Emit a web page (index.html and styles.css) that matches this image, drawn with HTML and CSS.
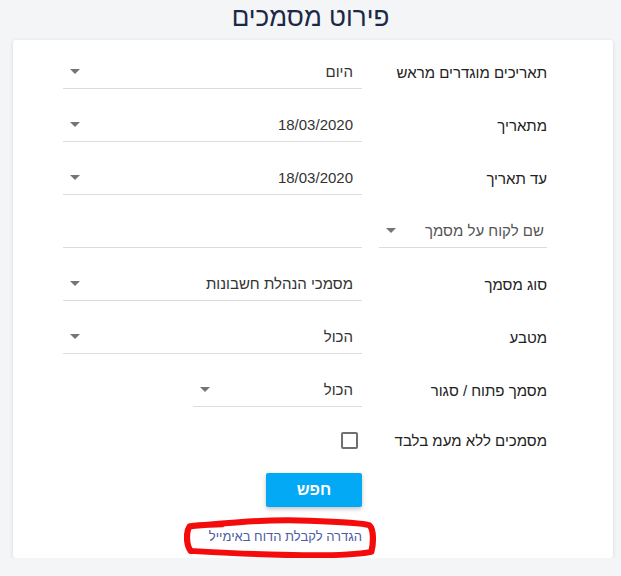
FILE: index.html
```html
<!DOCTYPE html>
<html lang="he" dir="rtl">
<head>
    <meta charset="UTF-8">
    <meta name="viewport" content="width=device-width, initial-scale=1.0">
    <title>פירוט מסמכים</title>
    <link rel="stylesheet" href="styles.css">
</head>
<body>
    <h1 class="page-title">פירוט מסמכים</h1>

    <div class="card">
        <!-- שורות הסינון -->
        <div class="row">
            <label class="row-label">תאריכים מוגדרים מראש</label>
            <div class="select">
                <span class="select-value">היום</span>
                <span class="arrow"></span>
            </div>
        </div>

        <div class="row">
            <label class="row-label">מתאריך</label>
            <div class="select">
                <span class="select-value">18/03/2020</span>
                <span class="arrow"></span>
            </div>
        </div>

        <div class="row">
            <label class="row-label">עד תאריך</label>
            <div class="select">
                <span class="select-value">18/03/2020</span>
                <span class="arrow"></span>
            </div>
        </div>

        <div class="row">
            <div class="select select-label">
                <span class="select-value muted">שם לקוח על מסמך</span>
                <span class="arrow"></span>
            </div>
            <div class="select">
                <span class="select-value"></span>
            </div>
        </div>

        <div class="row">
            <label class="row-label">סוג מסמך</label>
            <div class="select">
                <span class="select-value">מסמכי הנהלת חשבונות</span>
                <span class="arrow"></span>
            </div>
        </div>

        <div class="row">
            <label class="row-label">מטבע</label>
            <div class="select">
                <span class="select-value">הכול</span>
                <span class="arrow"></span>
            </div>
        </div>

        <div class="row">
            <label class="row-label">מסמך פתוח / סגור</label>
            <div class="field-half">
                <div class="select">
                    <span class="select-value">הכול</span>
                    <span class="arrow"></span>
                </div>
            </div>
        </div>

        <div class="row row-check">
            <label class="row-label">מסמכים ללא מעמ בלבד</label>
            <div>
                <span class="checkbox"></span>
            </div>
        </div>

        <div class="row row-actions">
            <div></div>
            <div class="actions">
                <button class="btn-search">חפש</button>
                <a class="email-link" href="#">הגדרה לקבלת הדוח באימייל
                    <!-- סימון ביד באדום -->
                    <svg class="scribble" width="196" height="44" viewBox="0 0 204 48" preserveAspectRatio="none">
                        <path d="M8 10 C 50 6, 90 2, 130 4 C 160 5, 185 6, 193 9 C 198 14, 197 30, 195 38 C 170 43, 120 42, 90 41 C 60 40, 25 38, 7 37 C 2 30, 2 16, 6 10 C 20 8, 26 9, 40 8" fill="none" stroke="#f40c0c" stroke-width="6.5" stroke-linecap="round" stroke-linejoin="round"/>
                    </svg>
                </a>
            </div>
        </div>
    </div>
</body>
</html>
```

FILE: styles.css
```css
body {
    margin: 0;
    background-color: #f4f5f7;
    font-family: "Liberation Sans", "DejaVu Sans", sans-serif;
    color: #212121;
}

.page-title {
    margin: 0 0 6px 0;
    height: 34px;
    line-height: 34px;
    font-size: 26px;
    font-weight: normal;
    text-align: center;
    color: #1c2846;
    width: 621px;
}

/* הכרטיס הלבן */
.card {
    width: 600px;
    height: 518px;
    margin-left: 13px;
    margin-right: 8px;
    box-sizing: border-box;
    padding: 15px 66px 0 50px;
    background-color: #fff;
    border-radius: 3px;
    box-shadow: 0 1px 4px rgba(0, 0, 0, 0.12);
}

.row {
    display: grid;
    grid-template-columns: 168px 299px;
    column-gap: 17px;
    align-items: center;
    height: 34px;
    margin-bottom: 19px;
}

.row-label {
    font-size: 15px;
}

.select {
    display: flex;
    align-items: center;
    justify-content: space-between;
    height: 33px;
    border-bottom: 1px solid #dcdcdc;
    padding: 0 9px 0 7px;
    font-size: 15px;
    color: #333;
}

.select-label {
    padding-right: 3px;
}

.muted {
    color: #555;
}

.arrow {
    width: 0;
    height: 0;
    border-left: 5px solid transparent;
    border-right: 5px solid transparent;
    border-top: 5px solid #757575;
}

.field-half {
    width: 169px;
}

.row-check {
    height: 28px;
}

.checkbox {
    display: block;
    width: 13px;
    height: 13px;
    border: 2px solid #707070;
    border-radius: 2px;
    margin-right: 4px;
}

.row-actions {
    align-items: start;
    height: auto;
}

.actions {
    display: flex;
    flex-direction: column;
    align-items: flex-start;
}

.btn-search {
    width: 96px;
    height: 34px;
    border: none;
    border-radius: 2px;
    background-color: #03a9f4;
    color: #fff;
    font-family: "Liberation Sans", "DejaVu Sans", sans-serif;
    font-size: 16px;
    font-weight: bold;
    box-shadow: 0 2px 4px rgba(0, 0, 0, 0.25);
    cursor: pointer;
}

.email-link {
    position: relative;
    margin-top: 21px;
    font-size: 13px;
    line-height: 18px;
    color: #4b5ba8;
    text-decoration: none;
}

.scribble {
    position: absolute;
    right: -18px;
    top: -11px;
}
```
